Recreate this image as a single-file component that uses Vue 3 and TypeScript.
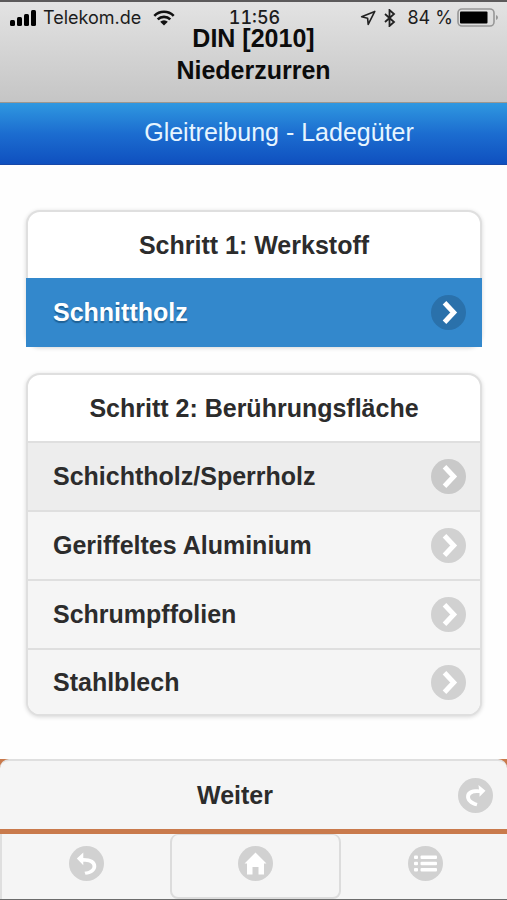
<script setup lang="ts">
import { ref } from 'vue'

const materials: string[] = ['Schnittholz']
const surfaces: string[] = ['Schichtholz/Sperrholz', 'Geriffeltes Aluminium', 'Schrumpffolien', 'Stahlblech']

const material = ref('Schnittholz')
const surface = ref('Schichtholz/Sperrholz')
</script>

<template>
  <div class="page">
    <header class="header">
      <div class="status">
        <div class="status-side">
          <svg class="signal" viewBox="0 0 28 18" aria-hidden="true">
            <rect x="0" y="11" width="5" height="6" rx="1.5" />
            <rect x="7" y="8" width="5" height="9" rx="1.5" />
            <rect x="14" y="5" width="5" height="12" rx="1.5" />
            <rect x="21" y="1" width="5" height="16" rx="1.5" />
          </svg>
          <span class="carrier">Telekom.de</span>
          <svg class="wifi" viewBox="0 0 22 16" aria-hidden="true">
            <path d="M1.3 5.8a13.8 13.8 0 0 1 19.4 0M4.7 9.4a9 9 0 0 1 12.6 0" />
            <path class="dot" d="M7.2 11.8a5.5 5.5 0 0 1 7.6 0L11 15.6z" />
          </svg>
        </div>
        <span class="clock">11:56</span>
        <div class="status-side status-right">
          <svg class="location" viewBox="0 0 16 16" aria-hidden="true">
            <path d="M14.8 1.4 1.6 6.800l6 1.400.6 6.200z" />
          </svg>
          <svg class="bluetooth" viewBox="0 0 12 18" aria-hidden="true">
            <path d="M1 5l9 8-4.500 4V1L10 5l-9 8" />
          </svg>
          <span class="percent">84 %</span>
          <svg class="battery" viewBox="0 0 42 20" aria-hidden="true">
            <rect class="shell" x="1" y="1" width="36" height="17" rx="4" />
            <rect x="3" y="3.5" width="27.5" height="12" rx="1" />
            <path class="cap" d="M39 7v5q2-.8 2-2.500T39 7z" />
          </svg>
        </div>
      </div>
      <h1 class="title">DIN [2010]<br />Niederzurren</h1>
    </header>

    <h2 class="banner">Gleitreibung - Ladegüter</h2>

    <main class="content">
      <section class="card">
        <h3 class="card-title">Schritt 1: Werkstoff</h3>
        <button
          v-for="name in materials"
          :key="name"
          type="button"
          class="row"
          :class="{ active: name === material }"
          @click="material = name"
        >
          <span>{{ name }}</span>
          <svg class="disc" viewBox="0 0 35 35" aria-hidden="true">
            <circle cx="17.500" cy="17.500" r="17.500" />
            <path class="chevron" d="M13.500 7.800l9.200 9.700-9.200 9.700" />
          </svg>
        </button>
      </section>

      <section class="card">
        <h3 class="card-title">Schritt 2: Berührungsfläche</h3>
        <button
          v-for="name in surfaces"
          :key="name"
          type="button"
          class="row"
          :class="{ hover: name === surface }"
          @click="surface = name"
        >
          <span>{{ name }}</span>
          <svg class="disc" viewBox="0 0 35 35" aria-hidden="true">
            <circle cx="17.500" cy="17.500" r="17.500" />
            <path class="chevron" d="M13.500 7.800l9.200 9.700-9.200 9.700" />
          </svg>
        </button>
      </section>
    </main>

    <footer class="footer">
      <button type="button" class="next">
        <span class="next-label">Weiter</span>
        <svg class="disc" viewBox="0 0 35 35" aria-hidden="true">
          <circle cx="17.500" cy="17.500" r="17.500" />
          <path class="glyph" d="M20.500 7l7 5.800-6 6v-3.800c-4-.3-8.500.1-9.400 3.300-.7 3 3.200 5.500 7.400 6.800l-1 3.200C12 27 7.600 22.500 8.100 18c.6-5.300 5.900-7 12.900-6.600z" />
        </svg>
      </button>
      <nav class="nav">
        <button type="button" class="nav-item" aria-label="Zurück">
          <svg class="disc" viewBox="0 0 35 35" aria-hidden="true">
            <circle cx="17.500" cy="17.500" r="17.500" />
            <path class="glyph" d="M14.300 6.500v5.400c8 .2 13 2.700 13 8.300 0 5-5 7.900-10.800 8.600l-1-3c4.200-.5 8-2.300 8-5.600 0-3.200-4-4.400-9.200-4.500v3.500L7.800 12.600z" />
          </svg>
        </button>
        <button type="button" class="nav-item home" aria-label="Startseite">
          <svg class="disc" viewBox="0 0 35 35" aria-hidden="true">
            <circle cx="17.500" cy="17.500" r="17.500" />
            <path class="glyph" d="M17.500 6.500 28.500 17.500H26V28.500H20.500V21h-6v7.500H9V17.500H6.500z" />
          </svg>
        </button>
        <button type="button" class="nav-item" aria-label="Menü">
          <svg class="disc" viewBox="0 0 35 35" aria-hidden="true">
            <circle cx="17.500" cy="17.500" r="17.500" />
            <g class="glyph">
              <rect x="6" y="9.500" width="4" height="3.500" rx="1" />
              <rect x="12.500" y="9.500" width="16.500" height="3.500" rx="1" />
              <rect x="6" y="15.800" width="4" height="3.500" rx="1" />
              <rect x="12.500" y="15.800" width="16.500" height="3.500" rx="1" />
              <rect x="6" y="22" width="4" height="3.500" rx="1" />
              <rect x="12.500" y="22" width="16.500" height="3.500" rx="1" />
            </g>
          </svg>
        </button>
      </nav>
    </footer>
  </div>
</template>

<style>
body {
  margin: 0;
  background: #fefefe;
}
</style>

<style scoped>
.page {
  display: flex;
  flex-direction: column;
  min-height: 100vh;
  color: #2c2c2c;
  font-family: 'Liberation Sans', Arial, sans-serif;
  font-size: 25px;
}

h1,
h2,
h3 {
  margin: 0;
  font-size: inherit;
}

button {
  box-sizing: border-box;
  margin: 0;
  border: 0;
  color: inherit;
  font: inherit;
  font-weight: bold;
  cursor: pointer;
}

.header {
  position: relative;
  padding: 20px 0 16px;
  border-top: 2px solid #5c5a5b;
  border-bottom: 1px solid #9b9790;
  background: linear-gradient(#e3e3e3, #c5c5c5);
  color: #0c0c0c;
}

.status {
  position: absolute;
  inset: 4px 8px auto 10px;
  display: grid;
  grid-template-columns: 1fr auto 1fr;
  align-items: center;
  height: 24px;
  color: #1c1c1c;
  font-family: Inter, Roboto, sans-serif;
  font-size: 18px;
  line-height: 24px;
}

.status-side {
  display: flex;
  align-items: center;
}

.status-right {
  justify-content: flex-end;
}

.signal {
  width: 28px;
  height: 18px;
}

.carrier {
  margin-left: 5px;
}

.clock {
  font-weight: 500;
  font-variant-numeric: tabular-nums;
}

.wifi {
  width: 22px;
  height: 16px;
  margin-left: 12px;
  fill: none;
  stroke: #111;
  stroke-width: 2.600;
}

.wifi .dot {
  fill: #111;
  stroke: none;
}

.location {
  width: 16px;
  height: 16px;
  fill: none;
  stroke: #222;
  stroke-width: 1.600;
  stroke-linejoin: round;
}

.bluetooth {
  width: 12px;
  height: 18px;
  margin-left: 8px;
  fill: none;
  stroke: #222;
  stroke-width: 1.800;
}

.percent {
  margin-left: 11px;
}

.battery {
  width: 42px;
  height: 20px;
  margin-left: 4px;
}

.battery .shell {
  fill: none;
  stroke: #979797;
  stroke-width: 1.600;
}

.battery .cap {
  fill: #979797;
}

.title {
  line-height: 32px;
  text-align: center;
}

.banner {
  padding: 1px 0 3px 51px;
  border-bottom: 1px solid #1748a8;
  background: linear-gradient(#2f98e0, #1c6dd0 50%, #0f50bf);
  color: #e6f5ff;
  font-weight: normal;
  line-height: 57px;
  text-align: center;
}

.content {
  display: flex;
  flex: 1;
  flex-direction: column;
  gap: 26px;
  padding: 45px 25px 43px 26px;
}

.card {
  display: flex;
  flex-direction: column;
  border: 2px solid #dfdfdf;
  border-radius: 14px;
  background: #fff;
  box-shadow: 0 1px 4px rgba(0, 0, 0, 0.16);
}

.card-title {
  padding-top: 1px;
  line-height: 65px;
  text-align: center;
}

.row {
  display: flex;
  align-items: center;
  justify-content: space-between;
  min-height: 69px;
  padding: 0 14px 0 25px;
  border-top: 2px solid #dfdfdf;
  background: #f5f5f5;
  text-align: left;
}

.row:last-child {
  min-height: 66px;
  border-radius: 0 0 12px 12px;
}

.row.hover {
  background: #ededed;
}

.row.active {
  min-height: 69px;
  margin: 0 -2px -2px;
  padding: 0 16px 0 27px;
  border-top: 0;
  border-radius: 0;
  background: #3388cc;
  color: #fff;
  text-shadow: 0 2px 1px #1f6196;
}

.disc {
  flex: none;
  width: 35px;
  height: 35px;
  fill: #d1d1d1;
}

.hover .disc {
  fill: #c9c9c9;
}

.active .disc {
  fill: #2a71ab;
}

.chevron {
  fill: none;
  stroke: #fff;
  stroke-width: 5;
}

.glyph {
  fill: #fff;
}

.footer {
  overflow: hidden;
  border-bottom: 1px solid #6c6c6c;
  background: #c97a4c;
}

.next {
  display: flex;
  align-items: center;
  width: 100%;
  min-height: 70px;
  padding: 0 14px 0 0;
  border-top: 2px solid #dfdfdf;
  border-radius: 9px 9px 0 0;
  background: #f5f5f5;
}

.next-label {
  flex: 1;
  padding-left: 12px;
}

.nav {
  display: grid;
  grid-template-columns: repeat(3, 1fr);
  margin: 5px -4px 0 0;
  background: #f5f5f5;
}

.nav-item {
  display: flex;
  align-items: center;
  justify-content: center;
  min-height: 65px;
  padding: 0 0 6px;
  background: #f5f5f5;
}

.nav-item:first-child {
  border-left: 2px solid #dfdfdf;
}

.home {
  border: 2px solid #dcdcdc;
  border-top-width: 1px;
  border-radius: 8px;
}
</style>
